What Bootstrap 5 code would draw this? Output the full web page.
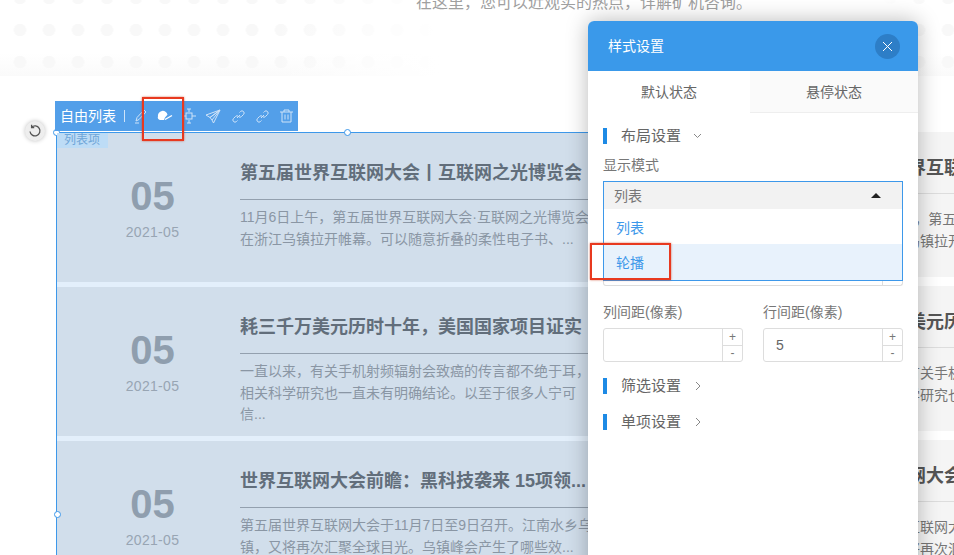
<!DOCTYPE html>
<html lang="zh">
<head>
<meta charset="utf-8">
<link href="https://cdn.jsdelivr.net/npm/bootstrap@5.3.0/dist/css/bootstrap.min.css" rel="stylesheet">
<style>
html,body{height:100%;overflow:hidden;background:#fff;font-family:"Liberation Sans","Noto Sans CJK SC",sans-serif;color:#666}
.stage{position:relative;width:954px;height:555px;overflow:hidden}
.hero{height:76px;position:relative;overflow:hidden;background-image:linear-gradient(to bottom,#fff 70%,#fafafa);background-color:#fff}
.hero-dots{position:absolute;inset:0;background-image:radial-gradient(circle 6.5px,#f8f8f8 92%,transparent 100%);background-size:29px 32px;background-position:5.5px 14px}
.hero-fade{position:absolute;inset:0;background:linear-gradient(to right,transparent 270px,#fff 440px,#fff 880px,transparent 930px)}
.hero-text{position:relative;font-size:16px;line-height:16px;margin-top:-5px;padding-left:416px;color:#a0a0a0;white-space:nowrap}
.list-wrap{padding:56px 0 0 57px;display:flex;gap:14px;width:1400px}
.news-col{width:582px;flex:none;display:flex;flex-direction:column;gap:5px;background:#e3effb;margin-top:1px}
.news-item{height:149px;display:flex;background:#d1deeb;flex:none}
.date-box{width:183px;flex:none;text-align:center;padding:42px 0 0 8px}
.date-day{font-size:40px;line-height:42px;font-weight:700;color:#8f9eae}
.date-ym{font-size:14px;line-height:18px;margin-top:6px;color:#98a5b3;letter-spacing:.3px}
.news-body{flex:1;padding:28px 0 0 0;min-width:0}
.news-title{font-size:18px;line-height:24px;font-weight:700;color:#626e7b;white-space:nowrap;width:348px;overflow:hidden;margin:0}
.news-rule{border-top:1px solid #93a0ae;margin:14px 0 7px}
.news-text{font-size:14px;line-height:21.500px;color:#8a96a4;white-space:nowrap;margin:0}
.right-col{background:#fff;gap:9px;margin-top:0}
.right-col .news-item{background:#f5f5f5;height:145px}
.right-col .news-body{padding-top:24px}
.right-col .news-title{color:#555;width:auto}
.right-col .news-rule{border-color:#ddd;margin:13px 0 15px}
.right-col .news-text{color:#777}
.right-col .date-day,.right-col .date-ym{color:#aaa}
.sel-frame{position:absolute;left:56px;top:132px;width:583px;height:440px;border:1px solid #3d98ea;pointer-events:none}
.handle{position:absolute;width:7px;height:7px;border-radius:50%;background:#fff;border:1px solid #3d98ea}
.tag-item{position:absolute;left:57px;top:133px;width:51px;height:15px;background:#bddcf6;color:#6fa6d8;font-size:12px;line-height:15px;padding-left:7px}
.toolbar{position:absolute;left:55px;top:101px;width:243px;height:30px;background:#539fe9;color:#fff;display:flex;align-items:center;padding-left:5px}
.toolbar-title{font-size:14px;line-height:30px;white-space:nowrap}
.toolbar-sep{width:1px;height:12px;background:#cfe4f9;margin:0 8px}
.toolbar svg{flex:none;display:block}
.ico-a{margin-left:1px}
.ico-b{margin-left:9px}
.ico-c{margin-left:9px}
.ico-d{margin-left:9px}
.ico-e{margin-left:11px}
.ico-f{margin-left:11px}
.ico-g{margin-left:11px}
.rot{position:absolute;left:25px;top:121px;width:20px;height:20px;border-radius:50%;background:#eee;box-shadow:0 0 4px rgba(0,0,0,.25);display:flex;align-items:center;justify-content:center}
.redbox{position:absolute;border:2.500px solid #e8391f;box-shadow:0 0 2px rgba(200,60,30,.7);pointer-events:none;z-index:5}
.redbox-a{left:142px;top:97px;width:42px;height:44px}
.redbox-b{left:590px;top:243px;width:81px;height:37px}
.panel{position:absolute;left:588px;top:21px;width:330px;height:560px;background:#fff;border-radius:6px 6px 0 0;box-shadow:0 0 22px rgba(0,0,0,.28)}
.panel-head{height:50px;background:#3a99ea;border-radius:6px 6px 0 0;color:#fff;font-size:14px;padding:0 18px 0 20px;display:flex;align-items:center;justify-content:space-between}
.panel-head span{margin-top:1px}
.close-round{width:25px;height:25px;border-radius:50%;background:#2d7ec7;display:flex;align-items:center;justify-content:center}
.tabs{display:flex;height:42px}
.tab-one{flex:0 0 162px;text-align:center;line-height:42px;font-size:14px;color:#666;background:#fff}
.tab-two{flex:1;text-align:center;line-height:42px;font-size:14px;color:#666;background:#fafafa;border-bottom:1px solid #eee}
.panel-body-x{padding:15px 15px 0}
.sec-head{display:flex;align-items:center;font-size:15px;line-height:16px;color:#666;height:16px}
.sec-head i{display:block;width:4px;height:16px;background:#1d8ae5;margin-right:14px}
.chev-down{margin-left:12px}
.chev-right{margin-left:14px}
.mt-a{margin-top:16px}
.mt-b{margin-top:20px}
.lbl{font-size:14px;line-height:18px;color:#777}
.lbl-first{margin-top:12px}
.sel-box{position:relative;height:29px;margin-top:7px;border:1px solid #3d98ea;background:#f2f2f2;font-size:14px;line-height:29px;color:#777;padding-left:10px}
.caret-up{position:absolute;right:21px;top:11px;width:0;height:0;border-left:5px solid transparent;border-right:5px solid transparent;border-bottom:5px solid #222}
.drop{position:absolute;left:15px;top:188px;width:300px;height:72px;background:#fff;border:1px solid #3d98ea;border-top:0;z-index:2;font-size:14px;color:#3d98ea}
.drop div{height:35px;line-height:39px;padding-left:12px}
.drop div+div{height:36px;line-height:38px;background:#e8f2fc}
.drop-gap{height:71px}
.under-box{height:5px;border:1px solid #ddd;border-top:0;border-radius:0 0 3px 3px;position:relative}
.under-box::after{content:"";position:absolute;right:19px;top:0;bottom:0;border-left:1px solid #ddd}
.spin-row{display:flex;gap:20px;margin-top:17px}
.spin-row>div{flex:1;min-width:0}
.spin{margin-top:7px;height:34px;border:1px solid #ddd;border-radius:3px;display:flex;font-size:14px;color:#666}
.spin-v{flex:1;padding-left:12px;line-height:32px}
.spin-b{width:20px;border-left:1px solid #ddd;display:flex;flex-direction:column;font-size:12px;line-height:12px;color:#777}
.spin-b span{flex:1;display:flex;align-items:center;justify-content:center;overflow:hidden}
.spin-b span+span{border-top:1px solid #ddd}
</style>
</head>
<body>
<div class="stage">
  <div class="hero"><div class="hero-dots"></div><div class="hero-fade"></div><div class="hero-text">在这里，您可以近观实的热点，详解矿机咨询。</div></div>
  <div class="list-wrap">
    <div class="news-col">
      <div class="news-item"><div class="date-box"><div class="date-day">05</div><div class="date-ym">2021-05</div></div><div class="news-body"><h5 class="news-title">第五届世界互联网大会丨互联网之光博览会</h5><div class="news-rule"></div><p class="news-text">11月6日上午，第五届世界互联网大会·互联网之光博览会<br>在浙江乌镇拉开帷幕。可以随意折叠的柔性电子书、...</p></div></div>
      <div class="news-item"><div class="date-box"><div class="date-day">05</div><div class="date-ym">2021-05</div></div><div class="news-body"><h5 class="news-title">耗三千万美元历时十年，美国国家项目证实</h5><div class="news-rule"></div><p class="news-text">一直以来，有关手机射频辐射会致癌的传言都不绝于耳，<br>相关科学研究也一直未有明确结论。以至于很多人宁可<br>信...</p></div></div>
      <div class="news-item"><div class="date-box"><div class="date-day">05</div><div class="date-ym">2021-05</div></div><div class="news-body"><h5 class="news-title">世界互联网大会前瞻：黑科技袭来 15项领...</h5><div class="news-rule"></div><p class="news-text">第五届世界互联网大会于11月7日至9日召开。江南水乡乌<br>镇，又将再次汇聚全球目光。乌镇峰会产生了哪些效...</p></div></div>
    </div>
    <div class="news-col right-col">
      <div class="news-item"><div class="date-box"><div class="date-day">05</div><div class="date-ym">2021-05</div></div><div class="news-body"><h5 class="news-title">第五届世界互联网大会</h5><div class="news-rule"></div><p class="news-text">11月6日上午，第五届<br>览会在浙江乌镇拉开</p></div></div>
      <div class="news-item"><div class="date-box"><div class="date-day">05</div><div class="date-ym">2021-05</div></div><div class="news-body"><h5 class="news-title">耗三千万美元历时十年</h5><div class="news-rule"></div><p class="news-text">一直以来，有关手机射<br>耳，相关科学研究也一</p></div></div>
      <div class="news-item"><div class="date-box"><div class="date-day">05</div><div class="date-ym">2021-05</div></div><div class="news-body"><h5 class="news-title">世界互联网大会前瞻</h5><div class="news-rule"></div><p class="news-text">第五届世界互联网大会<br>乡乌镇，又将再次汇聚</p></div></div>
    </div>
  </div>
  <div class="sel-frame"></div>
  <div class="handle" style="left:53px;top:129px"></div>
  <div class="handle" style="left:344px;top:129px"></div>
  <div class="handle" style="left:54px;top:511px"></div>
  <div class="tag-item">列表项</div>
  <div class="rot"><svg width="14" height="14" viewBox="0 0 14 14" fill="none" stroke="#555" stroke-width="1.300"><path d="M3.500 3.300A5 5 0 1 1 2 7.500"/><path d="M3.600.8v2.700h2.600"/></svg></div>
  <div class="toolbar">
    <span class="toolbar-title">自由列表</span><span class="toolbar-sep"></span>
    <svg class="ico-a" width="14" height="16" viewBox="0 0 14 16" fill="none" stroke="#cfe3f8" stroke-width="1"><path d="M2 13 3 9.500 10 2l2 2-7 7.500zM1 15h4"/></svg>
    <svg class="ico-b" width="16" height="12" viewBox="0 0 16 12"><path fill="#fff" d="M1 6.500A4.800 4.800 0 0 1 10.500 4.800L8 7.500 7 10H3A2.500 2.500 0 0 1 1 6.500z"/><path fill="none" stroke="#fff" stroke-width="1.400" d="M8 9.500 15 5.500"/></svg>
    <svg class="ico-c" width="14" height="16" viewBox="0 0 14 16" fill="none" stroke="#cfe3f8"><rect x="4" y="5" width="6" height="6"/><path d="M0 8h4M10 8h4M7 1v3M7 12v3M5 1h4M5 15h4"/></svg>
    <svg class="ico-d" width="16" height="15" viewBox="0 0 16 15" fill="none" stroke="#cfe3f8"><path d="M15 1 1 6l4 2.500L15 1 7 11l-2-2.500zM7 11l1.500 3L15 1"/></svg>
    <svg class="ico-e" width="13" height="13" viewBox="0 0 13 13" fill="none" stroke="#cfe3f8" stroke-width="1"><path d="m7.500 2.500 1-1a2 2 0 0 1 3 3l-2 2a2 2 0 0 1-3 0M5.500 10.500l-1 1a2 2 0 0 1-3-3l2-2a2 2 0 0 1 3 0M5 8l3-3"/></svg>
    <svg class="ico-f" width="13" height="13" viewBox="0 0 13 13" fill="none" stroke="#cfe3f8" stroke-width="1"><path d="m7.500 2.500 1-1a2 2 0 0 1 3 3l-2 2a2 2 0 0 1-3 0M5.500 10.500l-1 1a2 2 0 0 1-3-3l2-2a2 2 0 0 1 3 0M5 8l3-3"/></svg>
    <svg class="ico-g" width="13" height="14" viewBox="0 0 13 14" fill="none" stroke="#cfe3f8"><path d="M0 3h13M4 3V1h5v2M2 3v10h9V3M5 5.500v5M8 5.500v5"/></svg>
  </div>
  <div class="redbox redbox-a"></div>
  <div class="panel">
    <div class="panel-head"><span>样式设置</span><div class="close-round"><svg width="11" height="11" viewBox="0 0 11 11" stroke="#fff" stroke-width="1"><path d="m1 1 9 9M10 1l-9 9"/></svg></div></div>
    <div class="tabs"><div class="tab-one">默认状态</div><div class="tab-two">悬停状态</div></div>
    <div class="panel-body-x">
      <div class="sec-head"><i></i>布局设置<svg class="chev-down" width="9" height="6" viewBox="0 0 9 6" fill="none" stroke="#888"><path d="m1 1 3.500 3.500L8 1"/></svg></div>
      <div class="lbl lbl-first">显示模式</div>
      <div class="sel-box">列表<span class="caret-up"></span></div>
      <div class="drop"><div>列表</div><div>轮播</div></div>
      <div class="drop-gap"></div>
      <div class="under-box"></div>
      <div class="spin-row">
        <div><div class="lbl">列间距(像素)</div><div class="spin"><div class="spin-v"></div><div class="spin-b"><span>+</span><span>-</span></div></div></div>
        <div><div class="lbl">行间距(像素)</div><div class="spin"><div class="spin-v">5</div><div class="spin-b"><span>+</span><span>-</span></div></div></div>
      </div>
      <div class="sec-head mt-a"><i></i>筛选设置<svg class="chev-right" width="7" height="10" viewBox="0 0 7 10" fill="none" stroke="#888"><path d="m1 1 4 4-4 4"/></svg></div>
      <div class="sec-head mt-b"><i></i>单项设置<svg class="chev-right" width="7" height="10" viewBox="0 0 7 10" fill="none" stroke="#888"><path d="m1 1 4 4-4 4"/></svg></div>
    </div>
  </div>
  <div class="redbox redbox-b"></div>
</div>
<script src="https://cdn.jsdelivr.net/npm/bootstrap@5.3.0/dist/js/bootstrap.bundle.min.js"></script>
</body>
</html>
